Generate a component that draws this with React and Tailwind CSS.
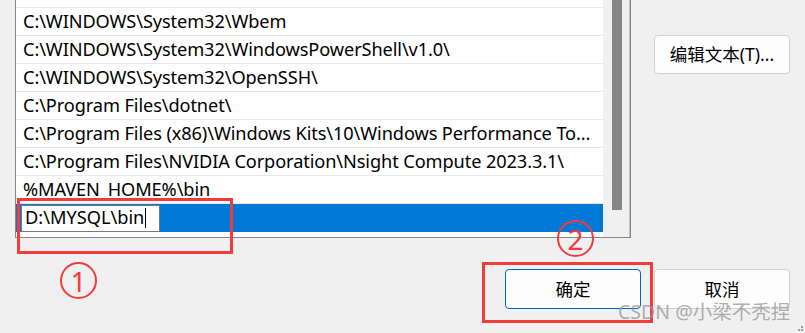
const rows = [
  "C:\\WINDOWS",
  "C:\\WINDOWS\\System32\\Wbem",
  "C:\\WINDOWS\\System32\\WindowsPowerShell\\v1.0\\",
  "C:\\WINDOWS\\System32\\OpenSSH\\",
  "C:\\Program Files\\dotnet\\",
  "C:\\Program Files (x86)\\Windows Kits\\10\\Windows Performance To...",
  "C:\\Program Files\\NVIDIA Corporation\\Nsight Compute 2023.3.1\\",
  "%MAVEN_HOME%\\bin",
];

const font = { fontFamily: '"Segoe UI", "Noto Sans", "Noto Sans CJK SC", sans-serif' };

function Marker({ n, className }) {
  return (
    <div
      className={`absolute w-[37px] h-[37px] rounded-full border-2 border-[#f23c3c] flex items-center justify-center text-[#f23c3c] text-[28px] leading-none ${className}`}
    >
      {n}
    </div>
  );
}

export default function App() {
  return (
    <div
      className="relative w-[805px] h-[333px] overflow-hidden bg-[#f0f0f0] text-black"
      style={font}
    >
      <div className="flex items-start">
        {/* path list */}
        <div className="ml-[15px] mt-[-21px] w-[616px] h-[259px] border border-[#828790] bg-white flex">
          <div className="w-[587px] flex flex-col">
            {rows.map((r) => (
              <div
                key={r}
                className="h-[28px] border-b border-[#e8e8e8] pl-[7px] flex items-center text-[18.2px] tracking-[-0.1px] whitespace-nowrap"
              >
                {r}
              </div>
            ))}
            <div className="h-[28px] bg-[#0078d7] pl-[5px] flex items-center">
              <div className="h-[27px] w-[139px] bg-white border border-[#7a7a7a] flex items-center pl-[3px] text-[18.2px]">
                D:\MYSQL\bin
                <span className="ml-[1px] w-px h-[20px] bg-black" />
              </div>
            </div>
          </div>
          <div className="flex-1 bg-[#f0f0f0] pl-[9px] border-r border-[#c0c0c0]">
            <div className="w-[10px] h-[230px] bg-[#858585]" />
          </div>
        </div>

        {/* right side */}
        <div className="ml-[23px] mt-[35px]">
          <button className="w-[136px] h-[39px] rounded-[4px] border border-[#d0d0d0] bg-[#fdfdfd] text-[17.5px]">
            编辑文本(T)...
          </button>
        </div>
      </div>

      <div className="flex justify-end gap-[13px] pr-[15px] mt-[31px]">
        <button className="w-[136px] h-[40px] rounded-[4px] border border-[#0067c0] bg-[#fdfdfd] text-[17.5px]">
          确定
        </button>
        <button className="w-[136px] h-[40px] rounded-[4px] border border-[#d0d0d0] bg-[#fdfdfd] text-[17.5px]">
          取消
        </button>
      </div>

      {/* annotations */}
      <div className="absolute left-[17px] top-[198px] w-[216px] h-[56px] border-[3px] border-[#f23c3c]" />
      <Marker n="1" className="left-[60px] top-[262px]" />
      <div className="absolute left-[482px] top-[262px] w-[171px] h-[61px] border-[3px] border-[#f23c3c]" />
      <Marker n="2" className="left-[557px] top-[220px]" />

      <div className="absolute left-[618px] top-[302px] text-[19.5px] text-[#9a9a9a]/80 leading-none">
        CSDN @小梁不秃捏
      </div>
      <div className="absolute right-[2px] bottom-[2px] grid grid-cols-2 gap-[1px]">
        <span />
        <span className="w-[2px] h-[2px] bg-[#999]" />
        <span className="w-[2px] h-[2px] bg-[#999]" />
        <span className="w-[2px] h-[2px] bg-[#999]" />
      </div>
    </div>
  );
}
